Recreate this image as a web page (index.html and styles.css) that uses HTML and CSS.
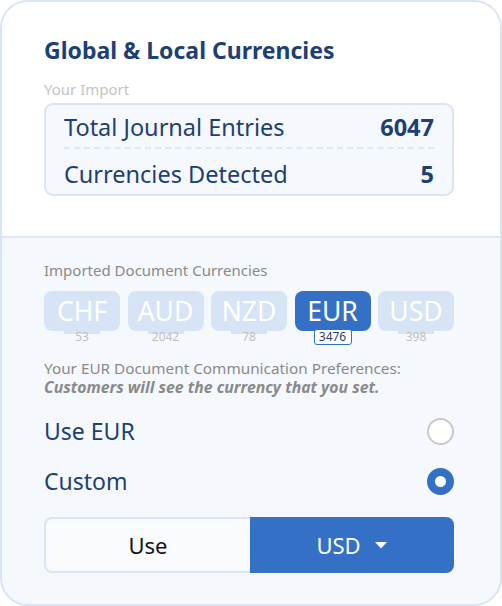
FILE: index.html
```html
<!DOCTYPE html>
<html>
<head>
<meta charset="utf-8">
<link rel="stylesheet" href="styles.css">
</head>
<body>
<div class="card">
  <div class="top">
    <h1 class="title">Global &amp; Local Currencies</h1>
    <div class="label light">Your Import</div>
    <div class="stats">
      <div class="stat"><span>Total Journal Entries</span><b>6047</b></div>
      <div class="stat"><span>Currencies Detected</span><b>5</b></div>
    </div>
  </div>
  <div class="bottom">
    <div class="label">Imported Document Currencies</div>
    <div class="chips">
      <div class="chip"><div class="code">CHF</div><div class="count">53</div></div>
      <div class="chip"><div class="code">AUD</div><div class="count">2042</div></div>
      <div class="chip"><div class="code">NZD</div><div class="count">78</div></div>
      <div class="chip active"><div class="code">EUR</div><div class="count">3476</div></div>
      <div class="chip"><div class="code">USD</div><div class="count">398</div></div>
    </div>
    <div class="prefs">
      <div>Your EUR Document Communication Preferences:</div>
      <div class="note">Customers will see the currency that you set.</div>
    </div>
    <div class="option"><span>Use EUR</span><span class="radio"></span></div>
    <div class="option"><span>Custom</span><span class="radio on"></span></div>
    <div class="btns">
      <div class="btn use">Use</div>
      <div class="btn sel">USD <svg width="14" height="8" viewBox="0 0 14 8"><path d="M1 1h12L7 7.5z" fill="#fff"/></svg></div>
    </div>
  </div>
</div>
</body>
</html>
```
FILE: styles.css
```css
* { box-sizing: border-box; }
html, body { margin: 0; padding: 0; }
body {
  width: 502px;
  height: 606px;
  font-family: "Noto Sans", "Open Sans", sans-serif;
  background: #ffffff;
}
.card {
  width: 502px;
  height: 606px;
  border: 2px solid #d9e5f4;
  border-radius: 28px;
  overflow: hidden;
  display: flex;
  flex-direction: column;
  background: #f5f8fd;
}
.top {
  background: #ffffff;
  height: 236px;
  border-bottom: 2px solid #dde8f6;
  padding: 34px 46px 0 42px;
}
.title {
  margin: 0;
  font-size: 23px;
  line-height: 28px;
  font-weight: 700;
  color: #1e3f73;
}
.label {
  font-size: 15px;
  line-height: 18px;
  color: #8a8a8a;
}
.label.light {
  color: #c4c4c4;
  margin-top: 16px;
}
.stats {
  margin-top: 5px;
  height: 93px;
  border: 2px solid #d9e5f4;
  border-radius: 9px;
  background: #f5f8fd;
  padding: 0 18px;
  display: flex;
  flex-direction: column;
}
.stat {
  flex: 1;
  display: flex;
  justify-content: space-between;
  align-items: center;
  font-size: 23.5px;
  color: #1e3f73;
}
.stat:first-child {
  border-bottom: 2px dashed #dde8f5;
  padding-top: 1px;
}
.stat:last-child { padding-top: 4px; }
.stat b { font-weight: 700; }
.bottom {
  flex: 1;
  padding: 23px 46px 0 42px;
}
.chips {
  margin-top: 12px;
  display: grid;
  grid-template-columns: repeat(5, 1fr);
  gap: 7.5px;
}
.chip {
  display: flex;
  flex-direction: column;
  align-items: center;
}
.code {
  width: 100%;
  height: 40px;
  border-radius: 8px;
  background: #d6e4f5;
  color: #ffffff;
  font-size: 26.5px;
  line-height: 40px;
  text-align: center;
}
.count {
  margin-top: -2px;
  min-width: 38px;
  padding: 0 4px;
  height: 16px;
  line-height: 14px;
  font-size: 12px;
  color: #c0c0c0;
  text-align: center;
  border-radius: 3px;
  border: 1px solid transparent;
}
.chip:not(.active) .count {
  background: linear-gradient(#d6e4f5, #d6e4f5) top / 100% 4px no-repeat;
}
.chip.active .code { background: #3570c7; }
.chip.active .count {
  background: #ffffff;
  border-color: #3570c7;
  color: #1e3f73;
}
.prefs {
  margin-top: 14px;
  font-size: 15.3px;
  line-height: 19px;
  color: #8a8a8a;
}
.note {
  font-weight: 700;
  font-style: italic;
  font-size: 15.8px;
}
.option {
  display: flex;
  justify-content: space-between;
  align-items: center;
  height: 50px;
  font-size: 23px;
  color: #1e3f73;
}
.prefs + .option { margin-top: 9px; }
.radio {
  width: 27px;
  height: 27px;
  border-radius: 50%;
  border: 2px solid #c8c8c8;
  background: #ffffff;
}
.radio.on {
  border: 8px solid #3570c7;
}
.btns {
  margin-top: 11px;
  height: 56px;
  display: flex;
}
.btn {
  flex: 1;
  display: flex;
  align-items: center;
  justify-content: center;
  font-size: 22px;
}
.btn.use {
  border: 2px solid #d9e5f4;
  border-right: none;
  border-radius: 8px 0 0 8px;
  background: #f8fafe;
  color: #111111;
}
.btn.sel {
  background: #3570c7;
  color: #ffffff;
  border-radius: 0 8px 8px 0;
  gap: 13px;
}
```
